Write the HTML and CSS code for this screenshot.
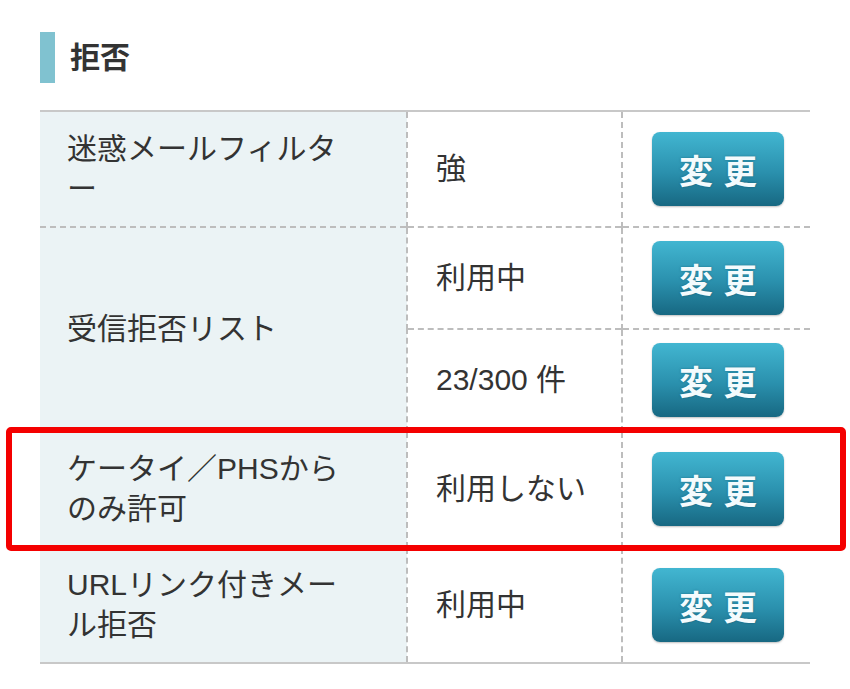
FILE: index.html
```html
<!DOCTYPE html>
<html lang="ja">
<head>
  <meta charset="UTF-8" />
  <meta name="viewport" content="width=device-width, initial-scale=1.0"/>
  <title>拒否設定</title>
  <link rel="stylesheet" href="styles.css">
</head>
<body>

<div class="section">
  <h2 class="section-title">拒否</h2>

  <table class="setting-table">
    <colgroup>
      <col class="col-name" />
      <col class="col-value" />
      <col class="col-action" />
    </colgroup>
    <tr>
      <th>迷惑メールフィルター</th>
      <td class="value">強</td>
      <td class="action"><button type="button">変更</button></td>
    </tr>
    <tr>
      <th rowspan="2">受信拒否リスト</th>
      <td class="value">利用中</td>
      <td class="action"><button type="button">変更</button></td>
    </tr>
    <tr>
      <td class="value">23/300 件</td>
      <td class="action"><button type="button">変更</button></td>
    </tr>
    <tr>
      <th>ケータイ／PHSからのみ許可</th>
      <td class="value">利用しない</td>
      <td class="action"><button type="button">変更</button></td>
    </tr>
    <tr class="last">
      <th>URLリンク付きメール拒否</th>
      <td class="value">利用中</td>
      <td class="action"><button type="button">変更</button></td>
    </tr>
  </table>

  <!-- annotation frame drawn over the highlighted row -->
  <div class="highlight"></div>
</div>

</body>
</html>
```

FILE: styles.css
```css
* {
  box-sizing: border-box;
  margin: 0;
  padding: 0;
}

body {
  background-color: #fff;
  color: #333;
  font-family: "Liberation Sans", "Noto Sans CJK JP", sans-serif;
}

.section {
  position: relative;
  padding: 32px 40px 0;
  width: 850px;
  height: 689px;
}

.section-title {
  border-left: 15px solid #80c2d0;
  padding-left: 15px;
  height: 51px;
  line-height: 51px;
  font-size: 30px;
  font-weight: bold;
  color: #333;
  margin-bottom: 27px;
}

.setting-table {
  width: 770px;
  border-collapse: collapse;
  table-layout: fixed;
  border-top: 2px solid #c8c8c8;
  border-bottom: 2px solid #c8c8c8;
}

.col-name { width: 367px; }
.col-value { width: 215px; }
.col-action { width: 188px; }

.setting-table th,
.setting-table td {
  font-size: 30px;
  font-weight: normal;
  line-height: 40px;
  text-align: left;
  vertical-align: middle;
  border-top: 2px dashed #bdbdbd;
}

.setting-table th {
  background-color: #ebf3f5;
  padding: 17px 50px 17px 27px;
  border-right: 2px dashed #bdbdbd;
}

.setting-table td.value {
  padding: 17px 10px 17px 28px;
  border-right: 2px dashed #bdbdbd;
}

.setting-table td.action {
  padding: 13px 0 13px 29px;
}

.setting-table tr:first-child th,
.setting-table tr:first-child td {
  border-top: 2px solid #c8c8c8;
}

.setting-table button {
  display: block;
  width: 132px;
  height: 74px;
  border: none;
  border-radius: 8px;
  background: linear-gradient(#42b6d1, #2a90ad 55%, #176882);
  color: #f4fbfd;
  font-family: "Noto Sans CJK JP", sans-serif;
  font-size: 34px;
  font-weight: bold;
  letter-spacing: 10px;
  padding-left: 10px;
  text-shadow: 0 0 2px rgba(0, 60, 80, 0.5);
  box-shadow: 0 1px 2px rgba(0, 0, 0, 0.25);
  cursor: pointer;
}

.highlight {
  position: absolute;
  left: 6px;
  top: 427px;
  width: 840px;
  height: 124px;
  border: 6px solid #f40000;
  border-radius: 5px;
}
```
